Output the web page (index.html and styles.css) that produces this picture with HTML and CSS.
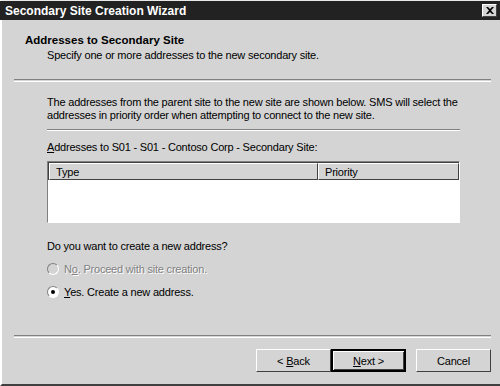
FILE: index.html
```html
<!DOCTYPE html>
<html lang="en">
<head>
    <meta charset="UTF-8">
    <title>Secondary Site Creation Wizard</title>
    <link rel="stylesheet" href="styles.css">
</head>
<body>
    <div class="window">
        <div class="titlebar">
            <span class="title">Secondary Site Creation Wizard</span>
            <span class="close">
                <svg width="8" height="7" viewBox="0 0 8 7"><path d="M0 0h2l2 2 2-2h2L5 3.5 8 7H6L4 5 2 7H0l3-3.5z" fill="#000"/></svg>
            </span>
        </div>

        <div class="header">
            <div class="heading">Addresses to Secondary Site</div>
            <div class="subheading">Specify one or more addresses to the new secondary site.</div>
        </div>

        <div class="separator"></div>

        <div class="content">
            <p class="intro">The addresses from the parent site to the new site are shown below. SMS will select the addresses in priority order when attempting to connect to the new site.</p>
            <div class="separator inner"></div>

            <div class="label"><u>A</u>ddresses to S01 - S01 - Contoso Corp - Secondary Site:</div>
            <div class="listview">
                <div class="listview-head">
                    <div class="col col-type">Type</div>
                    <div class="col col-priority">Priority</div>
                </div>
                <div class="listview-body"></div>
            </div>

            <div class="question">Do you want to create a new address?</div>
            <div class="radio disabled">
                <span class="radio-dot"></span>
                <span>N<u>o</u>. Proceed with site creation.</span>
            </div>
            <div class="radio checked">
                <span class="radio-dot"></span>
                <span><u>Y</u>es. Create a new address.</span>
            </div>
        </div>

        <div class="separator bottom"></div>

        <div class="buttons">
            <button class="btn">&lt; <u>B</u>ack</button>
            <button class="btn default"><u>N</u>ext &gt;</button>
            <button class="btn cancel">Cancel</button>
        </div>
    </div>
</body>
</html>
```

FILE: styles.css
```css
body {
    margin: 0;
    background-color: #d4d4d4;
    font-family: 'Liberation Sans', Arial, sans-serif;
    font-size: 11px;
    letter-spacing: -0.2px;
    color: #000;
}
.window {
    width: 500px;
    height: 386px;
    box-sizing: border-box;
    background-color: #d4d4d4;
    border-left: 2px solid #fff;
    border-top: 1px solid #e8e8e8;
    border-bottom: 2px solid #404040;
    display: flex;
    flex-direction: column;
}
.titlebar {
    height: 19px;
    margin-left: -2px;
    background-color: #222;
    display: flex;
    align-items: center;
    justify-content: space-between;
    padding: 0 3px 0 5px;
}
.title {
    color: #fff;
    font-weight: bold;
    font-size: 12px;
    letter-spacing: 0;
}
.close {
    width: 15px;
    height: 13px;
    box-sizing: border-box;
    background-color: #d4d4d4;
    border: 1px solid;
    border-color: #fff #404040 #404040 #fff;
    display: flex;
    align-items: center;
    justify-content: center;
}
.header {
    height: 59px;
    padding: 14px 0 0 23px;
    box-sizing: border-box;
}
.heading {
    font-weight: bold;
    font-size: 11.5px;
    letter-spacing: 0;
    height: 14px;
}
.subheading {
    margin-top: 1px;
    padding-left: 22px;
}
.separator {
    height: 1px;
    border-top: 1px solid #808080;
    border-bottom: 1px solid #fff;
    margin: 0 9px 0 12px;
}
.content {
    padding: 14px 38px 0 45px;
    height: 253px;
    box-sizing: border-box;
}
.intro {
    margin: 0;
    line-height: 13px;
}
.separator.inner {
    height: 0;
    margin: 7px 2px 0 0;
}
.label {
    margin-top: 10px;
}
.listview {
    margin: 8px 2px 0 0;
    height: 62px;
    box-sizing: border-box;
    border: 1px solid;
    border-color: #808080 #fff #fff #808080;
    background-color: #fff;
    display: flex;
    flex-direction: column;
}
.listview-head {
    display: flex;
    border: 1px solid;
    border-color: #404040 #d4d4d4 #d4d4d4 #404040;
    border-bottom: none;
    border-right: none;
}
.col {
    height: 17px;
    box-sizing: border-box;
    background-color: #d4d4d4;
    border: 1px solid;
    border-color: #fff #404040 #404040 #fff;
    padding: 2px 0 0 6px;
    line-height: 13px;
}
.col-type {
    width: 269px;
}
.col-priority {
    flex: 1;
}
.listview-body {
    flex: 1;
}
.question {
    margin-top: 17px;
}
.radio {
    display: flex;
    align-items: center;
    gap: 5px;
    margin-top: 10px;
    height: 13px;
}
.radio-dot {
    width: 12px;
    height: 12px;
    box-sizing: border-box;
    border-radius: 50%;
    border: 1px solid;
    border-color: #808080 #fff #fff #808080;
    background-color: #fff;
    position: relative;
}
.radio.disabled {
    color: #808080;
    text-shadow: 1px 1px 0 #fff;
}
.radio.disabled .radio-dot {
    background-color: #d4d4d4;
}
.radio.checked .radio-dot::after {
    content: '';
    position: absolute;
    left: 3px;
    top: 3px;
    width: 4px;
    height: 4px;
    border-radius: 50%;
    background-color: #000;
}
.buttons {
    display: flex;
    justify-content: flex-end;
    padding: 11px 9px 0 0;
}
.btn {
    width: 75px;
    height: 23px;
    box-sizing: border-box;
    background-color: #d4d4d4;
    border: 1px solid;
    border-color: #fff #404040 #404040 #fff;
    font-family: inherit;
    font-size: 11px;
    letter-spacing: -0.2px;
    color: #000;
    padding: 0;
}
.btn.default {
    border: 2px solid #000;
    box-shadow: inset 1px 1px 0 #fff, inset -1px -1px 0 #404040;
}
.btn.cancel {
    margin-left: 10px;
}
```
